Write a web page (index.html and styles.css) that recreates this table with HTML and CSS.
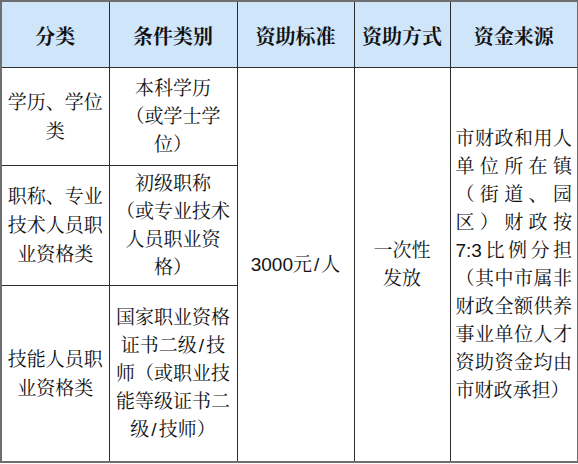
FILE: index.html
```html
<!DOCTYPE html>
<html lang="zh-CN">
<head>
<meta charset="utf-8">
<link rel="stylesheet" href="styles.css">
</head>
<body>
<table class="grid">
  <colgroup>
    <col class="c1"><col class="c2"><col class="c3"><col class="c4"><col class="c5">
  </colgroup>
  <thead>
    <tr class="head">
      <th>分类</th>
      <th>条件类别</th>
      <th>资助标准</th>
      <th>资助方式</th>
      <th>资金来源</th>
    </tr>
  </thead>
  <tbody>
    <tr class="r1">
      <td class="cat">学历、学位<br>类</td>
      <td class="cond">本科学历<br>（或学士学<br>位）</td>
      <td class="std" rowspan="3">3000元<span class="sl">/</span>人</td>
      <td class="way" rowspan="3">一次性<br>发放</td>
      <td class="src" rowspan="3">
        <div class="just">市财政和用人</div>
        <div class="just">单位所在镇</div>
        <div class="just">（街道、园</div>
        <div class="just">区）财政按</div>
        <div class="just">7:3比例分担</div>
        <div class="just">（其中市属非</div>
        <div class="just">财政全额供养</div>
        <div class="just">事业单位人才</div>
        <div class="just">资助资金均由</div>
        <div class="last">市财政承担）</div>
      </td>
    </tr>
    <tr class="r2">
      <td class="cat">职称、专业<br>技术人员职<br>业资格类</td>
      <td class="cond">初级职称<br>（或专业技术<br>人员职业资<br>格）</td>
    </tr>
    <tr class="r3">
      <td class="cat">技能人员职<br>业资格类</td>
      <td class="cond">国家职业资格<br>证书二级<span class="sl">/</span>技<br>师（或职业技<br>能等级证书二<br>级<span class="sl">/</span>技师）</td>
    </tr>
  </tbody>
</table>
</body>
</html>
```

FILE: styles.css
```css
html, body {
  margin: 0;
  padding: 0;
  background: #ffffff;
}

.grid {
  border-collapse: collapse;
  table-layout: fixed;
  width: 577px;
  font-family: "Liberation Sans", "Noto Serif CJK SC", "Noto Sans CJK SC", serif;
  font-size: 19px;
  line-height: 28px;
  color: #111111;
  border: 2px solid #6e6e6e;
}

.c1 { width: 108px; }
.c2 { width: 128px; }
.c3 { width: 117px; }
.c4 { width: 96px; }
.c5 { width: 128px; }

.grid th,
.grid td {
  border: 1.5px solid #2e2e2e;
  padding: 0 5px;
  text-align: center;
  vertical-align: middle;
}

.head th {
  height: 61px;
  background: #cfe5fa;
  font-size: 20px;
  font-weight: 700;
  padding-top: 4px;
}

.r1 td { height: 97px; }
.r2 td { height: 119px; }
.r3 td { height: 175px; }

.cat {
  line-height: 29px;
}

.sl {
  margin: 0 2px;
}

.src {
  padding: 0 5px;
}

.just {
  text-align: justify;
  text-align-last: justify;
}

.last {
  text-align: left;
}
```
